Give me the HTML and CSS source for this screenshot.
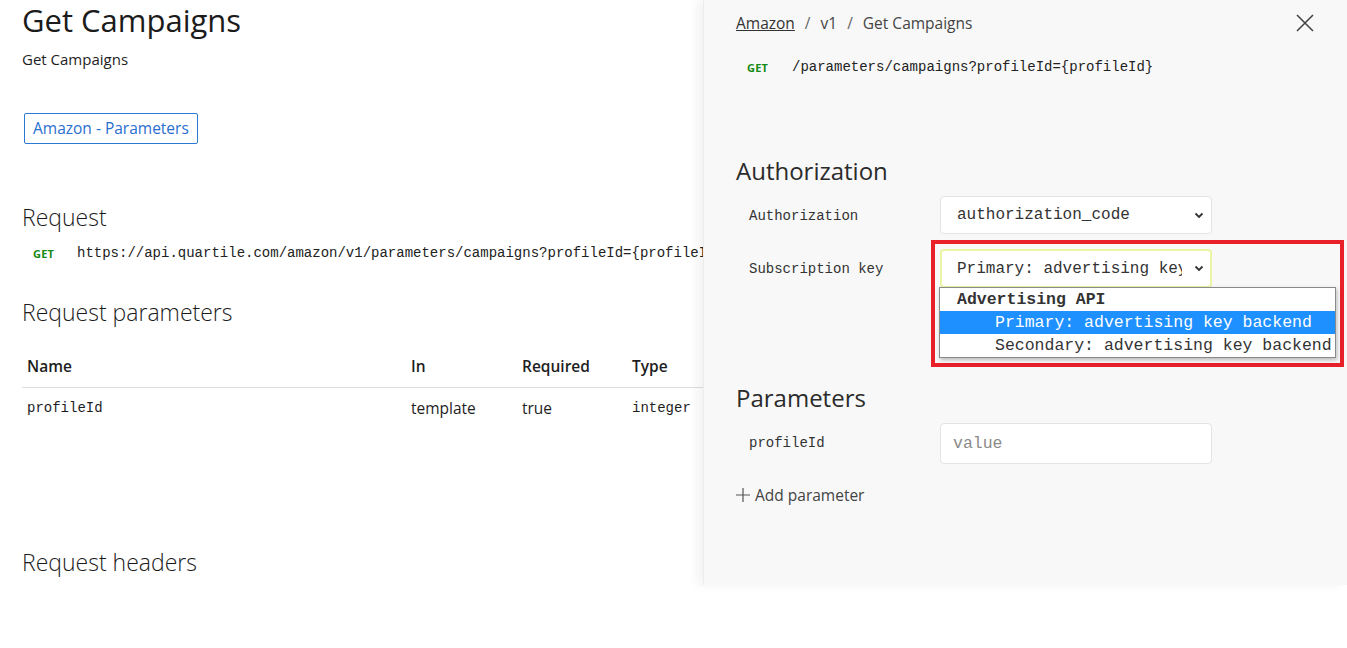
FILE: index.html
```html
<!DOCTYPE html>
<html lang="en">
<head>
<meta charset="utf-8">
<title>Get Campaigns</title>
<link rel="stylesheet" href="styles.css">
</head>
<body>
<div class="page">
  <main class="main">
    <h1 class="title">Get Campaigns</h1>
    <p class="subtitle">Get Campaigns</p>
    <a class="tag" href="#">Amazon - Parameters</a>

    <h2 class="section section-request">Request</h2>
    <div class="endpoint">
      <span class="method">GET</span>
      <span class="url">https://api.quartile.com/amazon/v1/parameters/campaigns?profileId={profileId}</span>
    </div>

    <h2 class="section section-params">Request parameters</h2>
    <table class="params">
      <thead>
        <tr><th class="c-name">Name</th><th class="c-in">In</th><th class="c-req">Required</th><th class="c-type">Type</th><th>Description</th></tr>
      </thead>
      <tbody>
        <tr><td class="mono">profileId</td><td>template</td><td>true</td><td class="mono">integer</td><td></td></tr>
      </tbody>
    </table>

    <h2 class="section section-headers">Request headers</h2>
  </main>

  <aside class="panel">
    <div class="panel-top">
      <nav class="crumbs"><a href="#">Amazon</a><span class="sep">/</span><span>v1</span><span class="sep">/</span><span>Get Campaigns</span></nav>
      <button class="close" aria-label="Close">
        <svg width="18" height="18" viewBox="0 0 18 18"><path d="M1 1 L17 17 M17 1 L1 17" stroke="#444" stroke-width="1.6" fill="none"/></svg>
      </button>
    </div>
    <div class="panel-endpoint"><span class="method">GET</span><span class="path">/parameters/campaigns?profileId={profileId}</span></div>

    <h3 class="panel-h panel-h-auth">Authorization</h3>
    <div class="form-row">
      <label class="flabel">Authorization</label>
      <div class="select">
        <span class="select-text">authorization_code</span>
        <svg class="chev" width="10" height="7" viewBox="0 0 10 7"><path d="M1.5 1.5 L5 5 L8.5 1.5" stroke="#333" stroke-width="1.8" fill="none"/></svg>
      </div>
    </div>
    <div class="form-row form-row-key">
      <label class="flabel">Subscription key</label>
      <div class="select select-focus">
        <span class="select-text">Primary: advertising key backend</span>
        <svg class="chev" width="10" height="7" viewBox="0 0 10 7"><path d="M1.5 1.5 L5 5 L8.5 1.5" stroke="#333" stroke-width="1.8" fill="none"/></svg>
      </div>
      <div class="highlight"></div>
      <ul class="dropdown">
        <li class="group">Advertising API</li>
        <li class="opt selected">Primary: advertising key backend</li>
        <li class="opt">Secondary: advertising key backend</li>
      </ul>
    </div>

    <h3 class="panel-h panel-h-params">Parameters</h3>
    <div class="form-row">
      <label class="flabel">profileId</label>
      <div class="input"><span class="placeholder">value</span></div>
    </div>
    <div class="add-param">
      <svg width="14" height="14" viewBox="0 0 14 14"><path d="M7 0 V14 M0 7 H14" stroke="#555" stroke-width="1.2" fill="none"/></svg>
      <span>Add parameter</span>
    </div>
  </aside>
</div>
</body>
</html>
```

FILE: styles.css
```css
* { box-sizing: border-box; }

body {
  margin: 0;
  font-family: "Open Sans", "Noto Sans", sans-serif;
  color: #1e1e1e;
  background: #fff;
}

.page {
  position: relative;
  height: 648px;
  overflow: hidden;
}

/* ---------- main column ---------- */
.main {
  padding-left: 22px;
  white-space: nowrap;
}

.title {
  margin: 0;
  padding-top: 1px;
  font-size: 31px;
  font-weight: 400;
  line-height: 38px;
  color: #1b1b1b;
}

.subtitle {
  margin: 10px 0 0;
  font-size: 15px;
  line-height: 20px;
}

.tag {
  display: inline-block;
  margin: 44px 0 0 2px;
  padding: 0 8px;
  height: 31px;
  line-height: 29px;
  border: 1px solid #2a7ad4;
  border-radius: 2px;
  font-size: 15.5px;
  color: #2a6fce;
  text-decoration: none;
}

.section {
  margin: 0;
  font-size: 23px;
  font-weight: 300;
  line-height: 30px;
  color: #1b1b1b;
}

.section-request { margin-top: 58px; }
.section-params { margin-top: 33px; }
.section-headers { margin-top: 119px; }

.endpoint {
  margin-top: 10px;
  display: flex;
  align-items: center;
  height: 22px;
}

.method {
  font-family: "Open Sans", sans-serif;
  font-size: 11px;
  font-weight: 700;
  color: #138a13;
  letter-spacing: 0.2px;
}

.endpoint .method { margin-left: 11px; width: 44px; }

.url {
  font-family: "Liberation Mono", monospace;
  font-size: 14px;
  color: #222;
}

.params {
  margin-top: 20px;
  width: 900px;
  border-collapse: collapse;
  font-size: 15.5px;
}

.params th {
  text-align: left;
  font-weight: 600;
  padding: 8px 5px 10px;
  border-bottom: 1px solid #dedede;
  line-height: 22px;
}

.params td {
  padding: 9px 5px;
  line-height: 22px;
}

.params .mono {
  font-family: "Liberation Mono", monospace;
  font-size: 14px;
}

.c-name { width: 384px; }
.c-in { width: 111px; }
.c-req { width: 110px; }
.c-type { width: 110px; }

/* ---------- side panel ---------- */
.panel {
  position: absolute;
  top: 0;
  right: 0;
  width: 644px;
  height: 585px;
  background: #f8f8f8;
  box-shadow: -6px 0 10px rgba(0, 0, 0, 0.05);
  border-left: 1px solid #ececec;
  padding: 0 0 0 32px;
  color: #333;
}

.panel-top {
  display: flex;
  align-items: center;
  justify-content: space-between;
  height: 45px;
  padding-right: 33px;
}

.crumbs {
  font-size: 15.5px;
  color: #444;
  display: flex;
}

.crumbs a { color: #333; text-decoration: underline; }
.crumbs .sep { margin: 0 10px; color: #666; }

.close {
  background: none;
  border: 0;
  padding: 0;
  display: flex;
  width: 18px;
  height: 18px;
}

.panel-endpoint {
  display: flex;
  align-items: center;
  height: 22px;
  margin-top: 11px;
}

.panel-endpoint .method { margin-left: 11px; width: 45px; }

.path {
  font-family: "Liberation Mono", monospace;
  font-size: 14px;
  color: #222;
}

.panel-h {
  margin: 0;
  font-size: 24px;
  font-weight: 400;
  line-height: 30px;
  color: #2b2b2b;
}

.panel-h-auth { margin-top: 78px; }
.panel-h-params { margin-top: 27px; }

.form-row {
  position: relative;
  display: flex;
  align-items: flex-start;
  margin-top: 10px;
}

.form-row-key { margin-top: 15px; height: 107px; }

.flabel {
  width: 204px;
  padding-left: 13px;
  padding-top: 12px;
  font-family: "Liberation Mono", monospace;
  font-size: 14px;
  color: #333;
}

.select, .input {
  width: 272px;
  height: 38px;
  background: #fff;
  border: 1px solid #e4e4e4;
  border-radius: 4px;
  display: flex;
  align-items: center;
  padding: 0 7px 0 16px;
  font-family: "Liberation Mono", monospace;
  font-size: 16px;
  color: #333;
}

.input { height: 41px; padding-left: 12px; font-size: 16.5px; }

.select-text {
  flex: 1;
  overflow: hidden;
  white-space: nowrap;
}

.chev { flex: none; margin-left: 12px; }

.select-focus {
  border: 2px solid #ecf5a4;
  height: 39px;
  padding-left: 15px;
  padding-right: 6px;
}

.placeholder { color: #8a8a8a; }

.highlight {
  position: absolute;
  left: 195px;
  top: -9px;
  width: 413px;
  height: 127px;
  border: 4px solid #e8202a;
  pointer-events: none;
}

.dropdown {
  position: absolute;
  left: 203px;
  top: 38px;
  width: 397px;
  margin: 0;
  padding: 0;
  list-style: none;
  background: #fff;
  border: 1px solid #8a8a8a;
  box-shadow: 1px 2px 4px rgba(0, 0, 0, 0.25);
  font-family: "Liberation Mono", monospace;
  font-size: 16.5px;
  white-space: nowrap;
  z-index: 2;
}

.dropdown li {
  height: 23px;
  line-height: 23px;
  color: #333;
}

.dropdown .group {
  font-weight: 700;
  padding-left: 17px;
}

.dropdown .opt { padding-left: 55px; }

.dropdown .selected {
  background: #1e90ff;
  color: #fff;
}

.add-param {
  display: flex;
  align-items: center;
  gap: 5px;
  margin-top: 20px;
  font-size: 15.5px;
  color: #444;
}
```
